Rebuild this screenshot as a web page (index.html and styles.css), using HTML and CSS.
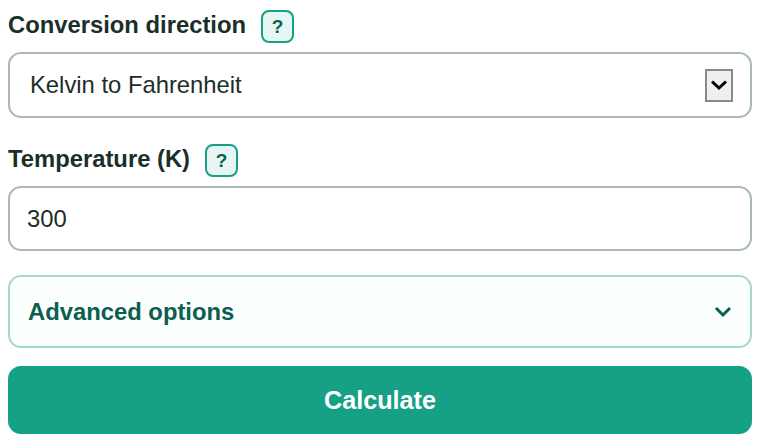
FILE: index.html
```html
<!DOCTYPE html>
<html lang="en">
<head>
<meta charset="utf-8">
<title>Kelvin to Fahrenheit</title>
<link rel="stylesheet" href="styles.css">
</head>
<body>
<form class="form">
  <div class="field field-first">
    <div class="label-row">
      <label class="label">Conversion direction</label>
      <span class="help">?</span>
    </div>
    <div class="control select">
      <span class="select-text">Kelvin to Fahrenheit</span>
      <span class="select-arrow">
        <svg width="18" height="12" viewBox="0 0 18 12"><path d="M2 2.5 L9 9 L16 2.5" fill="none" stroke="#000" stroke-width="3"/></svg>
      </span>
    </div>
  </div>
  <div class="field field-second">
    <div class="label-row">
      <label class="label">Temperature (K)</label>
      <span class="help">?</span>
    </div>
    <div class="control input">300</div>
  </div>
  <div class="advanced">
    <span class="advanced-title">Advanced options</span>
    <svg width="18" height="12" viewBox="0 0 18 12"><path d="M2 2 L9 9 L16 2" fill="none" stroke="#0b5e50" stroke-width="3"/></svg>
  </div>
  <button type="button" class="calc">Calculate</button>
</form>
</body>
</html>
```
FILE: styles.css
```css
html, body { margin: 0; padding: 0; background: #fff; }
body { width: 760px; height: 443px; overflow: hidden; font-family: "Liberation Sans", Arial, sans-serif; color: #1a2e2a; }
.form { display: flex; flex-direction: column; padding: 10px 8px 0; }
.field { display: flex; flex-direction: column; gap: 9px; }
.field-second { margin-top: 26px; }
.label-row { display: flex; align-items: center; gap: 15px; height: 33px; }
.label { font-size: 23.8px; font-weight: 700; color: #1a2e2a; padding-bottom: 3px; }
.help { box-sizing: border-box; width: 33px; height: 33px; display: flex; align-items: center; justify-content: center; border: 2px solid #16a085; border-radius: 8px; background: #e8f6f3; color: #0b5e50; font-size: 19px; font-weight: 700; }
.control { box-sizing: border-box; height: 66px; display: flex; align-items: center; border: 2px solid #a9bab5; border-radius: 13px; background: #fff; font-size: 23.8px; color: #1a2e2a; }
.select { justify-content: space-between; padding: 0 17px 0 20px; }
.select-arrow { box-sizing: border-box; width: 28px; height: 33px; display: flex; align-items: center; justify-content: center; background: #efefef; border: 2px solid #8a8a8a; }
.input { height: 65px; padding: 0 17px; }
.advanced { box-sizing: border-box; height: 73px; margin-top: 24px; display: flex; align-items: center; justify-content: space-between; padding: 0 18px 0 18px; border: 2px solid #a8d8cd; border-radius: 13px; background: #fbfffe; }
.advanced-title { font-size: 23.8px; font-weight: 700; color: #0b5e50; }
.calc { height: 68px; margin-top: 18px; border: 0; border-radius: 13px; background: #16a085; color: #fff; font-family: inherit; font-size: 25.2px; font-weight: 700; }
```
